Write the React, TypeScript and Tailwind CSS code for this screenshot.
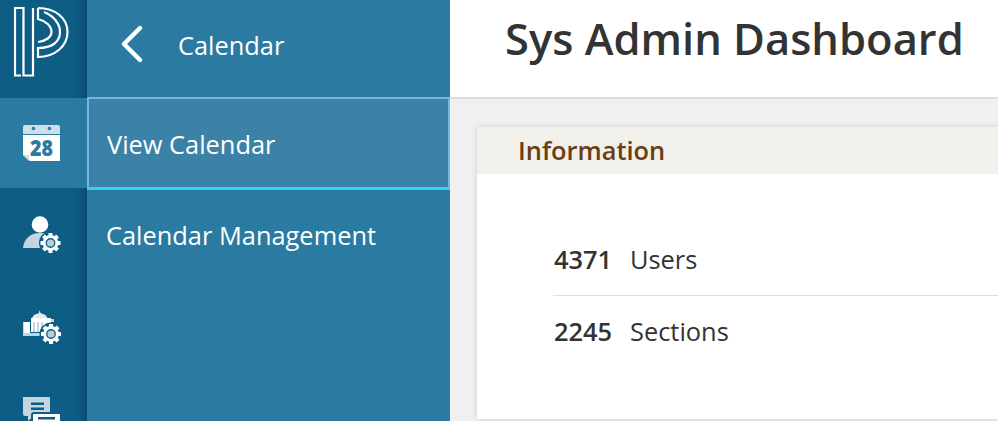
const font = { fontFamily: "'Open Sans', 'Noto Sans', sans-serif" }

function Logo() {
  return (
    <svg width="56" height="72" viewBox="14 6 56 72" fill="none" stroke="#fff" strokeWidth="2.2">
      {/* stem is two outlined strips, the bowl is three nested arcs */}
      <path d="M21 75.5H15V8H23.5V75.5H33V8" />
      <path d="M38 8C55 8 67.5 18 67.5 32C67.5 46 55 57 38 57V48C52 48 60 42 60 32C60 24 54 16 44 12" />
      <path d="M38 8V19C46 21 51.5 26 51.5 32C51.5 37 46 41 38 42" />
    </svg>
  )
}

function CalendarIcon() {
  return (
    <svg width="38" height="38" viewBox="0 0 38 38">
      <path d="M0 3a2 2 0 0 1 2-2h33a2 2 0 0 1 2 2v7H0z" fill="#cfdfe8" />
      <circle cx="10.500" cy="4.500" r="1.800" fill="#2b7aa1" />
      <circle cx="26.500" cy="4.500" r="1.800" fill="#2b7aa1" />
      <path d="M0 11h37v26H7l-7-6z" fill="#fff" />
      <path d="M0 31h6v6z" fill="#cfdfe8" />
      <text x="7" y="32" textLength="23" lengthAdjust="spacingAndGlyphs" fontSize="22" fontWeight="800" fill="#2b7aa1" fontFamily="'Open Sans', sans-serif">28</text>
    </svg>
  )
}

function Gear({ x, y }: { x: number; y: number }) {
  const teeth = 'M-2 -10h4v4h-4zM-2 6h4v4h-4zM-10 -2h4v4h-4zM6 -2h4v4h-4z'
  return (
    <g transform={`translate(${x} ${y})`}>
      <circle r="11.500" fill="#0d5d85" />
      <circle r="6.400" fill="none" stroke="#fff" strokeWidth="3" />
      <circle r="3.600" fill="#b9cfdb" />
      <path d={teeth} fill="#fff" />
      <path d={teeth} fill="#fff" transform="rotate(45)" />
    </g>
  )
}

function UserGearIcon() {
  return (
    <svg width="38" height="38" viewBox="0 0 38 38">
      <circle cx="17" cy="8.500" r="8.300" fill="#fff" />
      <path d="M0 32c1-9 7-15 17-15s16 6 17 15z" fill="#c3d5df" />
      <Gear x={27.5} y={27} />
    </svg>
  )
}

function SchoolGearIcon() {
  return (
    <svg width="38" height="38" viewBox="0 0 38 38">
      <path d="M16.500 0l1 3 5 2 2 3H9l2-3 5-2z" fill="#dfe9ef" />
      <path d="M1 12h6v11H1zM8 8h20v14H8z" fill="#fff" />
      <path d="M0 23h24v3H0zM0 12h1v11H0z" fill="#c3d5df" />
      <path d="M10 12h2v10h-2zM14 12h2v10h-2zM18 12h2v10h-2z" fill="#c3d5df" />
      <path d="M28 9h3v3h-3z" fill="#c3d5df" />
      <Gear x={28} y={24} />
    </svg>
  )
}

function MessagesIcon() {
  return (
    <svg width="38" height="24" viewBox="0 0 38 24">
      <path d="M2 0h24a1 1 0 0 1 1 1v18H11l-6 5v-5H2a2 2 0 0 1-2-2V1a1 1 0 0 1 2-1z" fill="#c3d5df" />
      <path d="M8 5.500h13v2.500H8zM8 10.500h13v2.500H8z" fill="#0d5d85" />
      <path d="M11 16h25a2 2 0 0 1 2 2v7H9v-7a2 2 0 0 1 2-2z" fill="#fff" stroke="#0d5d85" strokeWidth="2" />
      <path d="M15 20h17v2.500H15z" fill="#0d5d85" />
    </svg>
  )
}

function BackChevron() {
  return (
    <svg width="24" height="38" viewBox="0 0 24 38" fill="none" stroke="#fff" strokeWidth="4.400" strokeLinecap="round" strokeLinejoin="round" className="-mt-[4px]">
      <path d="M20 3L4 19L20 35" />
    </svg>
  )
}

export default function App() {
  return (
    <div className="flex h-[421px] w-[998px] overflow-hidden bg-[#f0f0f0]" style={font}>
      {/* icon rail */}
      <div className="flex w-[87px] shrink-0 flex-col bg-[#0d5d85] shadow-[inset_-9px_0_8px_-6px_rgba(0,40,70,0.45)]">
        <div className="h-[98px] pl-[14px] pt-[6px]">
          <Logo />
        </div>
        <div className="flex h-[90px] items-center justify-center bg-[#2b7aa1] pr-[3px]">
          <CalendarIcon />
        </div>
        <div className="flex h-[90px] items-center justify-center pr-[3px] pt-[4px]">
          <UserGearIcon />
        </div>
        <div className="flex h-[90px] items-center justify-center pr-[3px] pt-[12px]">
          <SchoolGearIcon />
        </div>
        <div className="flex justify-center pr-[3px] pt-[29px]">
          <MessagesIcon />
        </div>
      </div>

      {/* sub menu */}
      <div className="flex w-[363px] shrink-0 flex-col bg-[#2b7aa1] text-[25.4px] text-white">
        <div className="flex h-[97px] items-center pb-[6px] pl-[33px]">
          <BackChevron />
          <span className="ml-[34px]">Calendar</span>
        </div>
        <div className="flex h-[93px] items-center border-2 border-b-[3px] border-[#74b7e4] border-b-[#2bd5f5] bg-[#3b82a6] pl-[18px]">
          <span className="mt-[2px]">View Calendar</span>
        </div>
        <div className="pl-[19px] pt-[27px] leading-[36px]">Calendar Management</div>
      </div>

      {/* main */}
      <div className="flex min-w-0 flex-1 flex-col">
        <div className="flex h-[99px] shrink-0 items-start border-b-2 border-[#dcdcdc] bg-white pl-[55px] pt-[9px]">
          <h1 className="whitespace-nowrap text-[43.5px] font-semibold leading-[60px] text-[#333]">Sys Admin Dashboard</h1>
        </div>
        <div className="flex-1 pl-[27px] pt-[28px]">
          <div className="h-[292px] bg-white shadow-[0_0_6px_rgba(0,0,0,0.14)]">
            <div className="flex h-[47px] items-center bg-[#f1f0ea] pl-[41px] text-[25.4px] font-semibold text-[#6b3d14]">
              Information
            </div>
            <div className="pl-[76px] pt-[65px] text-[25.4px] text-[#333]">
              <div className="flex h-[57px] items-start border-b border-[#dedede] leading-[40px]">
                <span className="w-[77px] pl-[1px] font-semibold">4371</span>
                <span>Users</span>
              </div>
              <div className="flex pt-[15px] leading-[40px]">
                <span className="w-[77px] pl-[1px] font-semibold">2245</span>
                <span>Sections</span>
              </div>
            </div>
          </div>
        </div>
      </div>
    </div>
  )
}
